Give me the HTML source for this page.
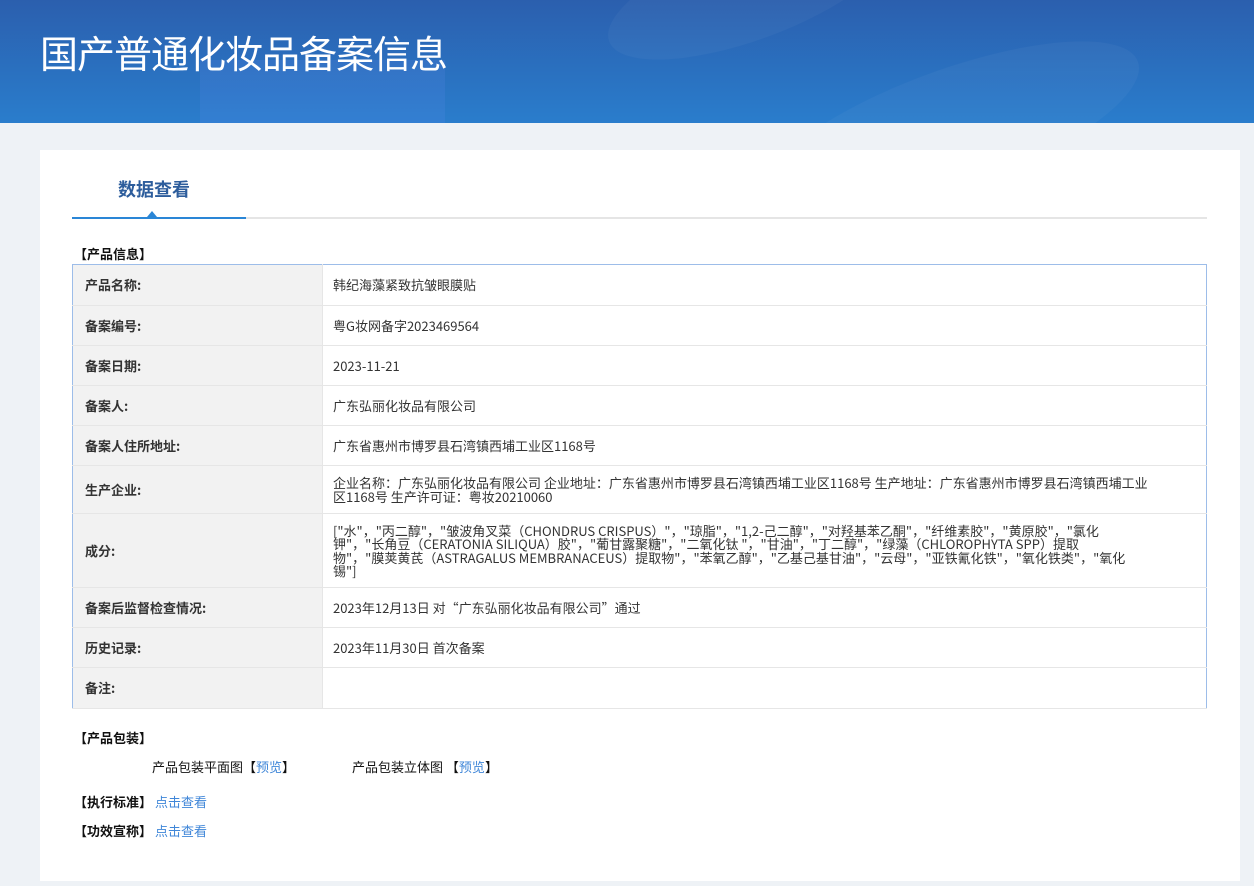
<!DOCTYPE html>
<html><head><meta charset="utf-8"><style>
*{margin:0;padding:0;box-sizing:border-box}
body{width:1254px;height:886px;background:#eef2f6;font-family:"Noto Sans CJK SC","Liberation Sans",sans-serif;font-size:13px;color:#333;position:relative;overflow:hidden}
.hd{position:absolute;left:0;top:0;width:1254px;height:123px;background:linear-gradient(180deg,#2b5fae 0%,#2a7dcc 100%);overflow:hidden}
.hd h1{position:absolute;left:40px;top:24px;font-size:38px;font-weight:normal;color:#fff;letter-spacing:-1px}
.blob{position:absolute;border-radius:50%;background:rgba(255,255,255,0.035)}
.card{position:absolute;left:40px;top:150px;width:1200px;height:731px;background:#fff}
.tab{position:absolute;left:78px;top:26px;font-size:18px;font-weight:bold;color:#2d5d9c}
.line{position:absolute;left:32px;top:67px;width:1135px;height:2px;background:#e5e5e5}
.line i{position:absolute;left:0;top:0;width:174px;height:2px;background:#2a86d6}
.tri{position:absolute;left:107px;top:61px;width:0;height:0;border-left:5px solid transparent;border-right:5px solid transparent;border-bottom:6px solid #2a86d6}
.sec{position:absolute;font-weight:bold;color:#111;font-size:13px;line-height:16px}
table{position:absolute;left:32px;top:114px;width:1135px;border-collapse:collapse;border:1px solid #9dbde9}
td{border-bottom:1px solid #e6e6e6;vertical-align:middle;line-height:13.5px}
td.l{width:250px;background:#f2f2f2;font-weight:bold;padding-left:12px;border-right:1px solid #e6e6e6;color:#333}
td.v{padding-left:10px;padding-right:50px;color:#333}
a{color:#3f86d8;text-decoration:none}
</style></head><body>
<div class="hd">
<div class="blob" style="left:200px;top:60px;width:245px;height:80px;border-radius:0;background:rgba(120,150,255,0.12)"></div>
<div class="blob" style="left:600px;top:-60px;width:300px;height:100px;transform:rotate(-20deg)"></div>
<div class="blob" style="left:750px;top:70px;width:400px;height:120px;transform:rotate(-20deg)"></div>
<h1>国产普通化妆品备案信息</h1>
</div>
<div class="card">
<div class="tab">数据查看</div>
<div class="line"><i></i></div>
<div class="tri"></div>
<div class="sec" style="left:34px;top:96px">【产品信息】</div>
<table>
<tr style="height:41px"><td class="l">产品名称:</td><td class="v">韩纪海藻紧致抗皱眼膜贴</td></tr>
<tr style="height:40px"><td class="l">备案编号:</td><td class="v">粤G妆网备字2023469564</td></tr>
<tr style="height:40px"><td class="l">备案日期:</td><td class="v">2023-11-21</td></tr>
<tr style="height:40px"><td class="l">备案人:</td><td class="v">广东弘丽化妆品有限公司</td></tr>
<tr style="height:40px"><td class="l">备案人住所地址:</td><td class="v">广东省惠州市博罗县石湾镇西埔工业区1168号</td></tr>
<tr style="height:48px"><td class="l">生产企业:</td><td class="v">企业名称：广东弘丽化妆品有限公司 企业地址：广东省惠州市博罗县石湾镇西埔工业区1168号 生产地址：广东省惠州市博罗县石湾镇西埔工业区1168号 生产许可证：粤妆20210060</td></tr>
<tr style="height:74px"><td class="l">成分:</td><td class="v" style="padding-right:80px">["水"，"丙二醇"，"皱波角叉菜（CHONDRUS CRISPUS）"，"琼脂"，"1,2-己二醇"，"对羟基苯乙酮"，"纤维素胶"，"黄原胶"，"氯化钾"，"长角豆（CERATONIA SILIQUA）胶"，"葡甘露聚糖"，"二氧化钛 "，"甘油"，"丁二醇"，"绿藻（CHLOROPHYTA SPP）提取物"，"膜荚黄芪（ASTRAGALUS MEMBRANACEUS）提取物"，"苯氧乙醇"，"乙基己基甘油"，"云母"，"亚铁氰化铁"，"氧化铁类"，"氧化锡"]</td></tr>
<tr style="height:40px"><td class="l">备案后监督检查情况:</td><td class="v">2023年12月13日 对“广东弘丽化妆品有限公司”通过</td></tr>
<tr style="height:40px"><td class="l">历史记录:</td><td class="v">2023年11月30日 首次备案</td></tr>
<tr style="height:41px"><td class="l">备注:</td><td class="v"></td></tr>
</table>
<div class="sec" style="left:34px;top:580px">【产品包装】</div>
<div style="position:absolute;left:112px;top:609px;color:#111;line-height:16px">产品包装平面图【<a>预览</a>】</div>
<div style="position:absolute;left:312px;top:609px;color:#111;line-height:16px">产品包装立体图 【<a>预览</a>】</div>
<div class="sec" style="left:34px;top:644px">【执行标准】 <a style="font-weight:normal">点击查看</a></div>
<div class="sec" style="left:34px;top:673px">【功效宣称】 <a style="font-weight:normal">点击查看</a></div>
</div>
</body></html>
